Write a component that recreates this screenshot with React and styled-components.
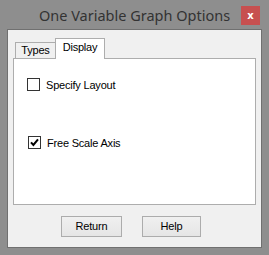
import React from "react";
import styled, { createGlobalStyle } from "styled-components";

const Global = createGlobalStyle`
  html, body { margin: 0; padding: 0; background: #8e8e8e; }
  * { box-sizing: border-box; }
`;

const Frame = styled.div`
  width: 269px;
  height: 255px;
  background: #8e8e8e;
  display: flex;
  flex-direction: column;
  padding: 0 7px 7px;
`;

const TitleBar = styled.div`
  height: 29px;
  display: grid;
  grid-template-columns: 1fr auto 1fr;
  align-items: start;
  margin: 0 -7px;
`;

const Title = styled.div`
  grid-column: 2;
  font-family: "Segoe UI", "Noto Sans", "Open Sans", sans-serif;
  font-size: 14.5px;
  color: #333;
  line-height: 20px;
  padding-top: 5px;
  white-space: nowrap;
`;

const Close = styled.div`
  grid-column: 3;
  justify-self: end;
  margin: 6px 9px 0 0;
  width: 19px;
  height: 19px;
  background: #c75050;
  color: #fff;
  display: flex;
  align-items: center;
  justify-content: center;
  font-family: "DejaVu Sans", sans-serif;
  font-weight: bold;
  font-size: 10px;
  line-height: 1;
`;

const Client = styled.div`
  flex: 1;
  background: #f0f0f0;
  border: 1px solid #707070;
  padding: 8px 5px 10px;
  display: flex;
  flex-direction: column;
  font-family: "Liberation Sans", Arial, sans-serif;
  font-size: 11px;
  letter-spacing: -0.2px;
  color: #000;
`;

const TabStrip = styled.div`
  height: 20px;
  display: flex;
  align-items: flex-end;
  padding-left: 2px;
`;

const Tab = styled.div`
  position: relative;
  border: 1px solid #adadad;
  border-bottom: none;
  display: flex;
  justify-content: center;
  background: ${(p) => (p.$active ? "#fff" : "#f0f0f0")};
  width: ${(p) => p.$w}px;
  height: ${(p) => (p.$active ? 21 : 16)}px;
  margin-left: ${(p) => (p.$active ? -1 : 0)}px;
  margin-bottom: ${(p) => (p.$active ? -1 : 0)}px;
  z-index: ${(p) => (p.$active ? 1 : 0)};
  padding-top: ${(p) => (p.$active ? 2 : 1)}px;
  line-height: 13px;
`;

const Panel = styled.div`
  height: 147px;
  background: #fff;
  border: 1px solid #adadad;
  padding: 19px 13px 0;
  display: flex;
  flex-direction: column;
  gap: 45px;
`;

const CheckRow = styled.label`
  display: flex;
  align-items: center;
  gap: 6px;
  height: 13px;
  padding-left: ${(p) => p.$indent || 0}px;
`;

const Box = styled.span`
  width: 13px;
  height: 13px;
  border: 1px solid #333;
  background: #fff;
  display: flex;
  align-items: center;
  justify-content: center;
`;

const Buttons = styled.div`
  margin-top: 11px;
  display: flex;
  gap: 20px;
  padding-left: 48px;
`;

const Button = styled.div`
  width: ${(p) => p.$w}px;
  height: 21px;
  border: 1px solid #acacac;
  background: linear-gradient(#f0f0f0, #e5e5e5);
  display: flex;
  align-items: center;
  justify-content: center;
  line-height: 13px;
`;

function Check({ checked, label, indent }) {
  return (
    <CheckRow $indent={indent}>
      <Box>
        {checked && (
          <svg width="9" height="9" viewBox="0 0 9 9">
            <path d="M1 4.3 L3.4 7 L8 1.3" fill="none" stroke="#000" strokeWidth="2" />
          </svg>
        )}
      </Box>
      <span>{label}</span>
    </CheckRow>
  );
}

export default function App() {
  return (
    <>
      <Global />
      <Frame>
        <TitleBar>
          <Title>One Variable Graph Options</Title>
          <Close>x</Close>
        </TitleBar>
        <Client>
          <TabStrip>
            <Tab $w={41}>Types</Tab>
            <Tab $w={50} $active>Display</Tab>
          </TabStrip>
          <Panel>
            <Check label="Specify Layout" />
            <Check label="Free Scale Axis" checked indent={1} />
          </Panel>
          <Buttons>
            <Button $w={61}>Return</Button>
            <Button $w={59}>Help</Button>
          </Buttons>
        </Client>
      </Frame>
    </>
  );
}
